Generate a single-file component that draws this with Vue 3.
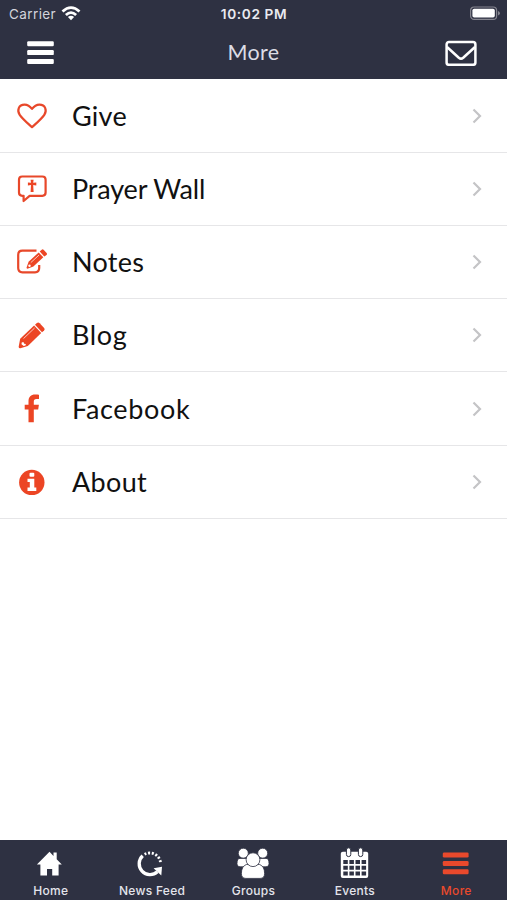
<script setup>
import { ref } from "vue";

const items = [
  { id: "give", label: "Give", spacing: 0.25 },
  { id: "prayer", label: "Prayer Wall", spacing: -0.15 },
  { id: "notes", label: "Notes", spacing: 0.3 },
  { id: "blog", label: "Blog", spacing: 0.65 },
  { id: "facebook", label: "Facebook", spacing: 0.65 },
  { id: "about", label: "About", spacing: 0.35 },
];

const tabs = [
  { id: "home", label: "Home" },
  { id: "feed", label: "News Feed" },
  { id: "groups", label: "Groups" },
  { id: "events", label: "Events" },
  { id: "more", label: "More" },
];

const activeTab = ref("more");
</script>

<template>
  <div class="screen">
    <header class="top">
      <div class="status">
        <div class="carrier">
          <span>Carrier</span>
          <svg class="wifi" viewBox="0 0 20 15" width="20" height="15">
            <g fill="none" stroke="#fff" stroke-width="2.8">
              <path d="M1.5 5.5Q10 -2.2 18.5 5.5" />
              <path d="M4.9 9Q10 4.3 15.1 9" />
            </g>
            <path d="M6.9 11Q10 8.4 13.1 11L10 14.2Z" fill="#fff" />
          </svg>
        </div>
        <span class="time">10:02 PM</span>
        <svg class="battery" viewBox="0 0 32 15" width="32" height="15">
          <rect x="1.6" y="1" width="26" height="12.4" rx="3.5" fill="none" stroke="#85858f" stroke-width="1.2" />
          <rect x="3.4" y="2.8" width="22.4" height="8.8" rx="1.8" fill="#fff" />
          <path d="M29 5q2 .8 2 2.2t-2 2.2z" fill="#85858f" />
        </svg>
      </div>
      <div class="nav">
        <button class="nav-btn" type="button" aria-label="Menu">
          <svg viewBox="0 0 28 24" width="28" height="24" fill="#fff">
            <rect x="0.2" y="0.2" width="26.6" height="5" rx="1.2" />
            <rect x="0.2" y="9.1" width="26.6" height="5" rx="1.2" />
            <rect x="0.2" y="17.9" width="26.6" height="5" rx="1.2" />
          </svg>
        </button>
        <h1>More</h1>
        <button class="nav-btn" type="button" aria-label="Messages">
          <svg viewBox="0 0 32 26" width="32" height="26" fill="none" stroke="#fff" stroke-width="2.5" stroke-linejoin="round">
            <rect x="1.6" y="2" width="28.8" height="22.8" rx="2.4" />
            <path d="M2 7 13.8 17.7q2.200 1.800 4.400 0L30 7" />
          </svg>
        </button>
      </div>
    </header>

    <main class="list">
      <a v-for="item in items" :key="item.id" class="row">
        <svg class="row-icon" viewBox="0 0 32 32" width="32" height="32">
          <path
            v-if="item.id === 'give'"
            d="M16 27.2C12.8 24.2 6.6 19 3.7 14.8 0.8 10.4 2.5 4.6 8.6 4.6 12.3 4.6 14.4 6.8 16 8.9 17.6 6.8 19.7 4.6 23.4 4.6 29.5 4.6 31.2 10.4 28.3 14.8 25.4 19 19.2 24.2 16 27.2Z"
            class="line"
          />
          <g v-else-if="item.id === 'prayer'">
            <path
              d="M6.2 3.5H26.4Q29.6 3.5 29.6 6.7V19.6Q29.6 22.8 26.4 22.8H13.6L7.6 28V22.8H6.2Q3 22.8 3 19.6V6.7Q3 3.5 6.2 3.5Z"
              class="line"
            />
            <path d="M14.6 6.8h3L17.2 9.8l3.100-.4v3l-3.100-.4.4 7h-3l.4-7-3.100.4V9.400l3.100.4z" class="solid" />
          </g>
          <g v-else-if="item.id === 'notes'">
            <path d="M20.5 4.7H6.4Q2.2 4.7 2.2 8.9V22.1Q2.2 26.3 6.4 26.3H19Q23.2 26.3 23.2 22.1V19" class="line" />
            <path d="M12.6 15.7 22.7 6.4l4.600 4.900-9.900 9.200-6 2.200q-1 0-.9-1z" class="solid" />
            <path d="M23.7 5.5 25.7 3.7q1-.8 1.900.1l3 3.200q.8 1-.1 1.900L28.3 10.5z" class="solid" />
            <path d="M14.8 16.6 23 9.1" stroke="#fff" stroke-width="0.7" />
            <circle cx="13.5" cy="19.7" r="1.2" fill="#fff" />
          </g>
          <g v-else-if="item.id === 'blog'">
            <path d="M4.2 19.8 18.1 6.6l7.100 7.400L11.8 27 4.4 29.3q-1.800.2-1.700-1.600z" class="solid" />
            <path d="M19 5.8 20.9 4.1q1.400-1.100 2.800.2l4.400 4.600q1.200 1.400 0 2.700L26 13.2z" class="solid" />
            <path d="M7.5 19.6 18.6 9" stroke="#fff" stroke-width="0.7" />
            <path d="M5.7 23.6 7.4 23l.8 1.800 1.700.3-.4 1.500-1.800.5-2.200-1.800z" fill="#fff" />
          </g>
          <path
            v-else-if="item.id === 'facebook'"
            d="M12.5 29.3V16.4H8.7V11.7h3.800V8.300c0-4.400 2.500-6.700 6.500-6.700 1.900 0 3.400.1 4 .2V6.100h-2.500c-2.100 0-2.700 1-2.700 2.600v3h5.100l-.7 4.700h-4.400v12.900z"
            class="solid"
          />
          <g v-else>
            <circle cx="15.8" cy="16.4" r="12.7" class="solid" />
            <rect x="13.5" y="6.7" width="4.8" height="4" rx="1" fill="#fff" />
            <path d="M11.5 12.7h6.800v8.800h2v3.400h-8.800v-3.400h2.300v-5.400h-2.300z" fill="#fff" />
          </g>
        </svg>
        <span class="row-label" :style="{ letterSpacing: item.spacing + 'px' }">{{ item.label }}</span>
        <svg class="chevron" viewBox="0 0 12 18" width="12" height="18">
          <path d="M2.5 2.5 9 9 2.5 15.5" fill="none" stroke="#c4c4c6" stroke-width="2.2" />
        </svg>
      </a>
    </main>

    <nav class="tabs">
      <button
        v-for="tab in tabs"
        :key="tab.id"
        class="tab"
        :class="{ active: tab.id === activeTab }"
        type="button"
        @click="activeTab = tab.id"
      >
        <svg viewBox="0 0 36 36" width="36" height="36" fill="currentColor">
          <path
            v-if="tab.id === 'home'"
            d="M16.5 5.7 20.5 9.9V6.600h3.200v6.700l5.100 5.100h-3.200V29.400h-6.400v-6.300h-5.200v6.300H7.400V18.400H3.900z"
          />
          <g v-else-if="tab.id === 'feed'">
            <path d="M8.7 9.7A10.6 10.6 0 0 0 23.4 25.7" fill="none" stroke="currentColor" stroke-width="3.3" />
            <path d="M19.6 22.3 28 20.7 27.3 29.4z" />
            <path d="M10.6 8.3A10.8 10.8 0 0 1 26.5 16.5" fill="none" stroke="currentColor" stroke-width="2.8" stroke-dasharray="2 1.7" />
          </g>
          <g v-else-if="tab.id === 'groups'" stroke="#2e3142" stroke-width="0.8">
            <circle cx="8.3" cy="7.2" r="5" />
            <circle cx="27.7" cy="7.2" r="5" />
            <path d="M5 12.4h8.500v8.400H5q-3.300 0-3-3.200 0-5.200 3-5.200zM31 12.400h-8.500v8.400H31q3.300 0 3-3.200 0-5.200-3-5.200z" />
            <path d="M11.3 18.5h13.400q4.900 2 4.900 8.900 0 5-4.500 5H10.900q-4.500 0-4.500-5 0-6.900 4.900-8.900z" />
            <circle cx="18" cy="13.7" r="6.9" />
          </g>
          <g v-else-if="tab.id === 'events'">
            <path d="M5.8 5.7H29.2q2 0 2 2V30q0 2-2 2H5.800q-2 0-2-2V7.700q0-2 2-2z" />
            <path
              d="M6.3 14h4.500v4H6.300zm6.100 0h4.500v4h-4.500zm6.100 0h4.500v4h-4.500zm6.100 0h4.500v4h-4.500zM6.300 19.800h4.500v4H6.300zm6.100 0h4.500v4h-4.500zm6.100 0h4.500v4h-4.500zm6.100 0h4.500v4h-4.500zM6.300 25.600h4.500v4H6.300zm6.100 0h4.500v4h-4.500zm6.100 0h4.500v4h-4.500zm6.100 0h4.500v4h-4.500z"
              fill="#2e3142"
            />
            <g stroke="#2e3142" stroke-width="1">
              <rect x="9.4" y="1.8" width="4.4" height="8.8" rx="2.2" />
              <rect x="21.4" y="1.8" width="4.4" height="8.8" rx="2.2" />
            </g>
          </g>
          <g v-else>
            <rect x="4.8" y="6.5" width="25.8" height="5" rx="1.3" />
            <rect x="4.8" y="15" width="25.8" height="5" rx="1.3" />
            <rect x="4.8" y="23.3" width="25.8" height="5" rx="1.3" />
          </g>
        </svg>
        <span>{{ tab.label }}</span>
      </button>
    </nav>
  </div>
</template>

<style>
body {
  margin: 0;
  background: #fff;
}
</style>

<style scoped>
.screen {
  display: flex;
  flex-direction: column;
  height: 100vh;
  overflow: hidden;
  background: #fff;
  font-family: Lato, "Open Sans", sans-serif;
}

.top {
  box-sizing: border-box;
  height: 79px;
  flex: none;
  background: #2e3142;
  color: #e9eaf0;
}

.status {
  display: grid;
  grid-template-columns: 1fr auto 1fr;
  align-items: center;
  height: 27px;
  padding: 0 6px 0 9px;
  font-family: Inter, sans-serif;
}

.carrier {
  display: flex;
  align-items: center;
  gap: 5px;
  font-size: 13.5px;
  letter-spacing: 0.4px;
  color: #d3d4dc;
}

.wifi {
  margin-top: -1px;
}

.time {
  margin-right: 2px;
  font-size: 13.7px;
  font-weight: 600;
  letter-spacing: 0.6px;
}

.battery {
  justify-self: end;
}

.nav {
  display: grid;
  grid-template-columns: 1fr auto 1fr;
  align-items: center;
  height: 52px;
  padding: 0 30px 0 27px;
}

.nav h1 {
  margin: -2px 0 0 3px;
  font-size: 21.5px;
  font-weight: 400;
  line-height: 52px;
  letter-spacing: 0.3px;
  color: #dcdde5;
}

button {
  padding: 0;
  border: none;
  background: none;
  color: inherit;
  font-family: inherit;
  cursor: pointer;
}

.nav-btn svg {
  display: block;
}

.nav-btn:last-child {
  justify-self: end;
}

.list {
  flex: 1;
  padding-top: 0.4px;
}

.row {
  box-sizing: border-box;
  display: flex;
  align-items: center;
  height: 73.25px;
  padding: 0 24px 0 16px;
  border-bottom: 1px solid #e6e6e8;
}

.row-icon {
  flex: none;
}

.line {
  fill: none;
  stroke: #e8482a;
  stroke-width: 2.2;
  stroke-linejoin: round;
}

.solid {
  fill: #ec4524;
}

.row-label {
  flex: 1;
  margin-left: 24px;
  font-size: 27px;
  line-height: 32px;
  color: #111;
}

.tabs {
  display: grid;
  grid-template-columns: repeat(5, 1fr);
  flex: none;
  height: 60px;
  background: #2e3142;
}

.tab {
  display: flex;
  flex-direction: column;
  align-items: center;
  padding-top: 6px;
  color: #fff;
}

.tab svg {
  flex: none;
}

.tab span {
  margin-top: 1px;
  font-family: Inter, sans-serif;
  font-size: 12px;
  font-weight: 500;
  line-height: 16px;
  letter-spacing: 0.3px;
  color: #e4e5ec;
}

.tab.active,
.tab.active span {
  color: #e9492c;
}
</style>
